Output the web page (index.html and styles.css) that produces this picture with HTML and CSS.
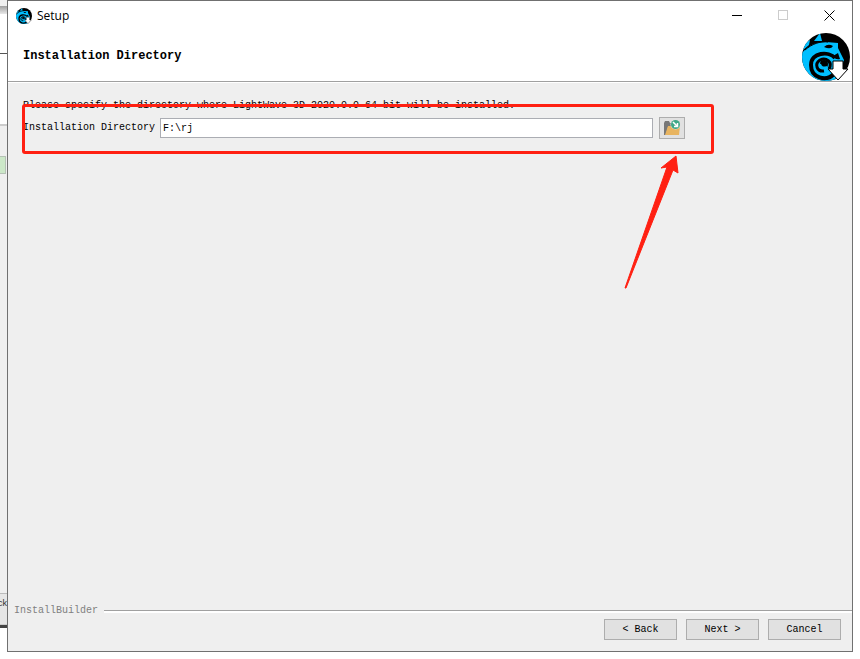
FILE: index.html
```
<!DOCTYPE html>
<html lang="en">
<head>
    <meta charset="UTF-8">
    <title>Setup</title>
    <link rel="stylesheet" href="styles.css">
</head>
<body>

    <!-- logo, used in the title bar and in the header -->
    <svg class="defs" width="0" height="0">
        <symbol id="logo" viewBox="0 0 48 48">
            <clipPath id="disc"><circle cx="24" cy="24" r="24"/></clipPath>
            <g clip-path="url(#disc)">
                <rect width="48" height="48" fill="#000"/>
                <path d="M18 0 L20 8 L12 8 Z M8 7 L7 12 L1 17 L2 10 Z" fill="#00bfff"/>
                <path d="M0 20 C7 12 14 9 24 9 L36 10 L36 15 L42 27 L41 30 L32 29 L34 48 L0 48 Z" fill="#00bfff"/>
                <path d="M3 17 C10 11 18 8 26 9" fill="none" stroke="#000" stroke-width="1"/>
                <path d="M22 14 Q26 10 31 13 Q29 17 22 14 Z M31 23 L36 20 L38 26 Q33 27 31 23 Z" fill="#000"/>
                <path d="M33 25 C27 18 9 19 9 32 C9 45 24 49 32 41" fill="none" stroke="#000" stroke-width="4"/>
                <path d="M27 36 C31 29 24 24 18 27 C12 31 15 39 22 38" fill="none" stroke="#000" stroke-width="3"/>
                <circle cx="22" cy="31" r="4" fill="#000"/>
                <path d="M18 31 Q19 36 25 34" fill="none" stroke="#00bfff" stroke-width="2"/>
            </g>
            <path d="M31 28 H41 V36 H46 L36 47 L26 36 H31 Z" fill="#fff" stroke="#000"/>
        </symbol>
    </svg>

    <div class="desktop">
        <div class="behind">
            <div class="b-top"></div>
            <div class="b-white"></div>
            <div class="b-panel">
                <div class="b-green"></div>
                <div class="b-btn"><span>ck</span></div>
            </div>
        </div>

        <div class="window">
            <div class="titlebar">
                <svg class="app-icon" width="16" height="16"><use href="#logo"/></svg>
                <span class="app-name">Setup</span>
                <button class="win-btn" aria-label="Minimize">
                    <svg width="11" height="11"><path d="M0 5.5 H10" stroke="#000"/></svg>
                </button>
                <button class="win-btn" aria-label="Maximize" disabled>
                    <svg width="11" height="11"><rect x="0.5" y="0.5" width="9" height="9" fill="none" stroke="#ccc"/></svg>
                </button>
                <button class="win-btn" aria-label="Close">
                    <svg width="11" height="11"><path d="M0.5 0.5 L10.5 10.5 M10.5 0.5 L0.5 10.5" stroke="#000"/></svg>
                </button>
            </div>

            <div class="header">
                <h1>Installation Directory</h1>
                <svg class="logo" width="48" height="48"><use href="#logo"/></svg>
            </div>

            <div class="content">
                <p>Please specify the directory where LightWave 3D 2020.0.0 64 bit will be installed.</p>
                <div class="field">
                    <label for="dir">Installation Directory</label>
                    <input type="text" id="dir" value="F:\rj">
                    <button class="browse" aria-label="Browse">
                        <svg width="18" height="16" viewBox="0 0 18 16">
                            <path d="M1 15 V3 L2 1 H6 L7 3 H9 V7 H5 L3 15 Z" fill="#777"/>
                            <path d="M5 6 H17 L16 15 H2 Z" fill="#e8b460"/>
                            <circle cx="12.5" cy="4.5" r="5" fill="#e0e0e0"/>
                            <circle cx="12.5" cy="4.5" r="4.5" fill="#3fa887"/>
                            <path d="M10 2 L14.5 6.5 M14.5 3 V6.5 H11" fill="none" stroke="#fff" stroke-width="1.5"/>
                        </svg>
                    </button>
                    <div class="mark"></div>
                    <svg class="arrow" width="56" height="136" viewBox="0 0 56 136">
                        <path d="M52 1 L54 18 L49 15 L2 133 L1 133 L43 12 L37 13 Z" fill="#ff2012" stroke="#ff2012" stroke-linejoin="round"/>
                    </svg>
                </div>
            </div>

            <div class="brand">InstallBuilder</div>
            <div class="footer">
                <button>&lt; Back</button>
                <button>Next &gt;</button>
                <button>Cancel</button>
            </div>
        </div>
    </div>

</body>
</html>
```

FILE: styles.css
```
* {
    box-sizing: border-box;
}
body {
    margin: 0;
    background-color: #fff;
    color: #000;
    font-family: "Liberation Mono", monospace;
    font-size: 10px;
    line-height: 14px;
}
.defs {
    position: absolute;
}
.desktop {
    display: grid;
    grid-template-columns: 7px 1fr;
    min-height: 100vh;
    padding: 0 7px 7px 0;
}

/* slice of the window behind */
.behind {
    display: flex;
    flex-direction: column;
    overflow: hidden;
    padding-bottom: 24px;
}
.b-top {
    height: 14px;
    border-top: 6px solid #f0f0f0;
    background: linear-gradient(#a0a0a0, #e8e8e8);
}
.b-white {
    height: 110px;
    background: linear-gradient(#fff 39px, #555 39px, #555 40px, #fff 40px);
}
.b-panel {
    flex: 1;
    display: flex;
    flex-direction: column;
    justify-content: space-between;
    border-top: 2px solid #ccc;
    border-bottom: 3px solid #444;
    background-color: #efefef;
}
.b-green {
    height: 18px;
    margin: 30px 1px 0 0;
    border: 1px solid #b5c2b5;
    border-left: none;
    background-color: #cce8c8;
}
.b-btn {
    display: flex;
    justify-content: flex-end;
    height: 32px;
    padding-top: 2px;
    border-top: 1px solid #bbb;
    border-bottom: 1px solid #ccc;
    background-color: #e6e6e6;
    color: #333;
    font-family: "Liberation Sans", sans-serif;
    font-size: 9px;
}

.window {
    display: flex;
    flex-direction: column;
    border: 1px solid #707070;
    background-color: #efefef;
}
.titlebar {
    display: flex;
    align-items: center;
    height: 29px;
    padding-left: 8px;
    background-color: #fff;
}
.app-name {
    flex: 1;
    margin-left: 5px;
    font-family: "Open Sans", sans-serif;
    font-size: 12px;
}
.win-btn {
    display: flex;
    align-items: center;
    justify-content: center;
    width: 46px;
    height: 29px;
    padding: 0;
    border: none;
    background: none;
}
.header {
    display: flex;
    align-items: center;
    justify-content: space-between;
    height: 52px;
    padding: 0 2px 0 15px;
    border-bottom: 1px solid #a0a0a0;
    background-color: #fff;
}
.header h1 {
    margin: 0;
    font-size: 12px;
}
.logo {
    overflow: visible;
    margin-top: 2px;
}
.content {
    flex: 1;
    padding: 16px 15px 0;
    border-top: 1px solid #fff;
}
.content p {
    margin: 0 0 4px;
}
.field {
    position: relative;
    display: flex;
    align-items: center;
    max-width: 662px;
}
.field label {
    margin-right: 5px;
}
.field input {
    flex: 1;
    min-width: 0;
    height: 20px;
    padding: 0 2px;
    border: 1px solid #abadb3;
    background-color: #fff;
    font: inherit;
}
.browse {
    display: flex;
    align-items: center;
    justify-content: center;
    width: 26px;
    height: 22px;
    margin-left: 6px;
    padding: 0;
    border: 1px solid #adadad;
    background-color: #e1e1e1;
}

/* red callout over the field */
.mark {
    position: absolute;
    top: -13px;
    left: -1px;
    right: -29px;
    height: 50px;
    border: 3px solid #ff2012;
    border-radius: 3px;
    pointer-events: none;
}
.arrow {
    position: absolute;
    top: 38px;
    right: 5px;
    pointer-events: none;
}

.brand {
    display: flex;
    align-items: center;
    gap: 6px;
    padding-left: 6px;
    color: #808080;
}
.brand::after {
    content: "";
    flex: 1;
    height: 2px;
    border-top: 1px solid #a0a0a0;
    background-color: #fff;
}
.footer {
    display: flex;
    justify-content: flex-end;
    gap: 9px;
    padding: 1px 11px 11px;
}
.footer button {
    width: 73px;
    height: 21px;
    padding: 0;
    border: 1px solid #adadad;
    background-color: #e1e1e1;
    color: #000;
    font: inherit;
}
```
